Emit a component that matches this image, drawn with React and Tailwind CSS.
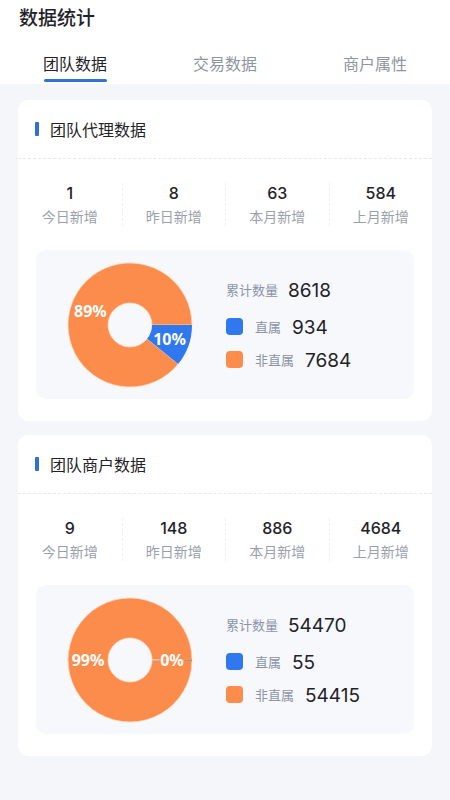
import React, { useState } from 'react';

const FONT = { fontFamily: '"Noto Sans CJK SC", "Noto Sans", sans-serif' };
const NUM = { fontFamily: 'Inter, "Noto Sans", sans-serif' };

const BLUE = '#2f78f0';
const ORANGE = '#fb8c4b';

const sections = [
  {
    title: '团队代理数据',
    stats: [
      { value: '1', label: '今日新增' },
      { value: '8', label: '昨日新增' },
      { value: '63', label: '本月新增' },
      { value: '584', label: '上月新增' },
    ],
    total: '8618',
    direct: '934',
    indirect: '7684',
    directDeg: 39,
    directPct: '10%',
    indirectPct: '89%',
  },
  {
    title: '团队商户数据',
    stats: [
      { value: '9', label: '今日新增' },
      { value: '148', label: '昨日新增' },
      { value: '886', label: '本月新增' },
      { value: '4684', label: '上月新增' },
    ],
    total: '54470',
    direct: '55',
    indirect: '54415',
    directDeg: 0.4,
    directPct: '0%',
    indirectPct: '99%',
  },
];

const polar = (cx, cy, r, deg) => {
  const a = (deg * Math.PI) / 180;
  return [cx + r * Math.cos(a), cy + r * Math.sin(a)];
};

const arc = (cx, cy, R, r, start, end) => {
  const large = end - start > 180 ? 1 : 0;
  const [x1, y1] = polar(cx, cy, R, start);
  const [x2, y2] = polar(cx, cy, R, end);
  const [x3, y3] = polar(cx, cy, r, end);
  const [x4, y4] = polar(cx, cy, r, start);
  return `M${x1} ${y1} A${R} ${R} 0 ${large} 1 ${x2} ${y2} L${x3} ${y3} A${r} ${r} 0 ${large} 0 ${x4} ${y4} Z`;
};

const Donut = ({ directDeg, directPct, indirectPct }) => {
  const cx = 65;
  const cy = 65;
  const R = 62;
  const r = 22;
  const mid = (R + r) / 2;
  const [bx, by] = polar(cx, cy, mid, directDeg / 2);
  const [ox, oy] = polar(cx, cy, mid, directDeg + (360 - directDeg) / 2);
  const label = {
    fontFamily: '"Noto Sans", "DejaVu Sans", sans-serif',
    fontWeight: 700,
    fontSize: 16,
    paintOrder: 'stroke',
  };
  return (
    <svg width="130" height="130" viewBox="0 0 130 130">
      <path d={arc(cx, cy, R, r, directDeg, 359.99)} fill={ORANGE} stroke="#ffd9bd" strokeWidth="0.8" />
      <path d={arc(cx, cy, R, r, 0, directDeg)} fill={BLUE} />
      {directDeg < 2 && <line x1={cx + 54} y1={cy} x2={cx + R} y2={cy} stroke="#c9702f" strokeWidth="0.8" />}
      <text x={ox} y={oy} textAnchor="middle" dominantBaseline="central" fill="#fff" stroke={ORANGE} strokeWidth="2" style={label}>
        {indirectPct}
      </text>
      <text x={bx} y={by} textAnchor="middle" dominantBaseline="central" fill="#fff" stroke={directDeg < 2 ? ORANGE : BLUE} strokeWidth="2" style={label}>
        {directPct}
      </text>
    </svg>
  );
};

const Section = ({ data }) => (
  <div className="bg-white rounded-[10px]">
    <div className="h-[59px] flex items-center px-[17px] border-b border-dashed border-[#e6e8ee]">
      <span className="w-[4px] h-[14px] bg-[#2f6fd6] rounded-[1px]" />
      <span className="ml-[11px] text-[16px] text-[#1f2329]">{data.title}</span>
    </div>
    <div className="grid grid-cols-4 pt-[24px] pb-[24px]">
      {data.stats.map((s, i) => (
        <div
          key={s.label}
          className={`flex flex-col items-center ${i > 0 ? 'border-l border-dashed border-[#eef0f4]' : ''}`}
        >
          <span className="text-[16px] leading-[20px] font-medium text-[#1f2329]" style={NUM}>{s.value}</span>
          <span className="mt-[3px] text-[14px] leading-[20px] text-[#9aa1ad]">{s.label}</span>
        </div>
      ))}
    </div>
    <div className="mx-[18px] mb-[22px] h-[149px] rounded-[10px] bg-[#f7f8fb] flex items-center">
      <div className="ml-[29px]">
        <Donut directDeg={data.directDeg} directPct={data.directPct} indirectPct={data.indirectPct} />
      </div>
      <div className="ml-[31px] flex flex-col">
        <div className="h-[24px] flex items-center">
          <span className="text-[13px] text-[#8b93a7]">累计数量</span>
          <span className="ml-[10px] pt-[4px] text-[19px] text-[#1f2329]" style={NUM}>{data.total}</span>
        </div>
        <div className="mt-[13px] h-[24px] flex items-center">
          <span className="w-[17px] h-[17px] rounded-[4px] bg-[#2f78f0]" />
          <span className="ml-[12px] text-[13px] text-[#8b93a7]">直属</span>
          <span className="ml-[11px] pt-[4px] text-[19px] text-[#1f2329]" style={NUM}>{data.direct}</span>
        </div>
        <div className="mt-[9px] h-[24px] flex items-center">
          <span className="w-[17px] h-[17px] rounded-[4px] bg-[#fb8c4b]" />
          <span className="ml-[12px] text-[13px] text-[#8b93a7]">非直属</span>
          <span className="ml-[11px] pt-[4px] text-[19px] text-[#1f2329]" style={NUM}>{data.indirect}</span>
        </div>
      </div>
    </div>
  </div>
);

export default function App() {
  const [tab, setTab] = useState(0);
  const tabs = ['团队数据', '交易数据', '商户属性'];

  return (
    <div className="w-[450px] min-h-[800px] bg-[#f5f6fa]" style={FONT}>
      <div className="bg-white h-[84px]">
        <div className="pl-[19px] pt-[4px] text-[19px] leading-[26px] font-medium text-[#1f2329]">数据统计</div>
        <div className="grid grid-cols-3 mt-[20px]">
          {tabs.map((t, i) => (
            <button key={t} onClick={() => setTab(i)} className="flex flex-col items-center">
              <span className={`text-[16px] leading-[26px] ${tab === i ? 'text-[#1f2329]' : 'text-[#8f959e]'}`}>{t}</span>
              <span className={`mt-[3px] h-[3px] w-[63px] rounded-full ${tab === i ? 'bg-[#3370d8]' : 'bg-transparent'}`} />
            </button>
          ))}
        </div>
      </div>
      <div className="px-[18px] pt-[16px] pb-[40px] flex flex-col gap-[14px]">
        {sections.map((s) => (
          <Section key={s.title} data={s} />
        ))}
      </div>
    </div>
  );
}
